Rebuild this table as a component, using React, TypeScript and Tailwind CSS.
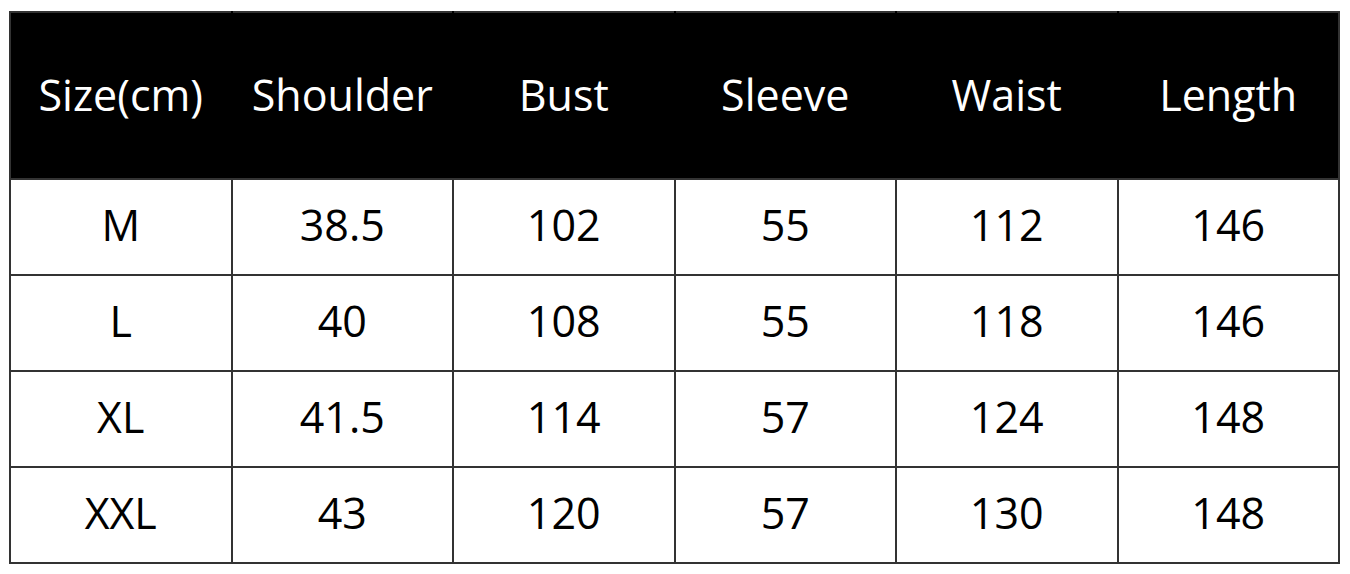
import React from "react";

const headers = ["Size(cm)", "Shoulder", "Bust", "Sleeve", "Waist", "Length"];
const rows = [
  ["M", "38.5", "102", "55", "112", "146"],
  ["L", "40", "108", "55", "118", "146"],
  ["XL", "41.5", "114", "57", "124", "148"],
  ["XXL", "43", "120", "57", "130", "148"],
];

export default function App() {
  return (
    <div className="w-[1350px] h-[574px] bg-white pl-[9px] pt-[11px]" style={{ fontFamily: '"Open Sans", "Noto Sans", sans-serif' }}>
      <table className="border-collapse w-[1331px] table-fixed">
        <thead>
          <tr className="h-[167px] bg-black">
            {headers.map((h) => (
              <th key={h} className="border-2 border-black border-t-[#333] border-b-[#333] first:border-l-[#333] last:border-r-[#333] text-white font-normal text-[43px] text-center align-middle p-0 pb-[1px]">
                {h}
              </th>
            ))}
          </tr>
        </thead>
        <tbody>
          {rows.map((r, i) => (
            <tr key={i} className="h-[96px]">
              {r.map((c, j) => (
                <td key={j} className="border-2 border-[#333] text-black text-[43px] text-center align-middle p-0 pb-[4px]">
                  {c}
                </td>
              ))}
            </tr>
          ))}
        </tbody>
      </table>
    </div>
  );
}
